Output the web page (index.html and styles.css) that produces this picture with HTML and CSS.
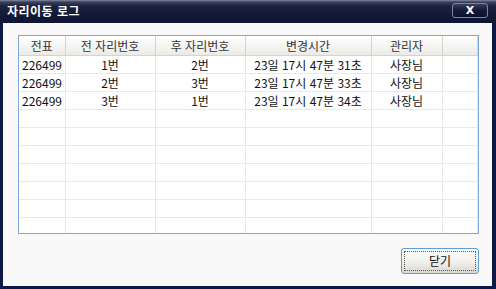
FILE: index.html
```html
<!DOCTYPE html>
<html lang="ko">
<head>
  <meta charset="UTF-8">
  <title>자리이동 로그</title>
  <link rel="stylesheet" href="styles.css">
</head>
<body>

<div class="window">
  <div class="titlebar">
    <span class="title">자리이동 로그</span>
    <div class="close-btn">X</div>
  </div>

  <div class="client">
    <div class="grid">
      <table>
        <colgroup>
          <col class="c-slip">
          <col class="c-seat">
          <col class="c-seat">
          <col class="c-time">
          <col class="c-admin">
          <col>
        </colgroup>
        <thead>
          <tr>
            <th>전표</th>
            <th>전 자리번호</th>
            <th>후 자리번호</th>
            <th>변경시간</th>
            <th>관리자</th>
            <th></th>
          </tr>
        </thead>
        <tbody id="rows"></tbody>
      </table>
    </div>

    <div class="actions">
      <button class="close-dialog"><span>닫기</span></button>
    </div>
  </div>
</div>

<script>
  const logs = [
    ["226499", "1번", "2번", "23일 17시 47분 31초", "사장님"],
    ["226499", "2번", "3번", "23일 17시 47분 33초", "사장님"],
    ["226499", "3번", "1번", "23일 17시 47분 34초", "사장님"]
  ];

  const rows = document.getElementById("rows");
  for (let i = 0; i < 10; i++) {
    const tr = document.createElement("tr");
    const data = logs[i] || ["", "", "", "", ""];
    data.concat([""]).forEach((v, j) => {
      const td = document.createElement("td");
      td.textContent = v;
      if (j === 0) td.className = "left";
      tr.appendChild(td);
    });
    rows.appendChild(tr);
  }
</script>

</body>
</html>
```

FILE: styles.css
```css
html, body {
  margin: 0;
  padding: 0;
  height: 100%;
  overflow: hidden;
  font-family: "Noto Sans CJK KR", "Liberation Sans", sans-serif;
  font-size: 12px;
}

.window {
  height: 289px;
  box-sizing: border-box;
  display: flex;
  flex-direction: column;
  background: #0d1844;
  padding: 0 4px 3px 3px;
}

.titlebar {
  height: 23px;
  flex: none;
  margin: 0 -4px 0 -3px;
  padding: 0 8px 0 7px;
  display: flex;
  align-items: center;
  justify-content: space-between;
  background: linear-gradient(#858b9c 0, #3a4060 2px, #1c2340 6px, #121a38 14px, #0e1634 100%);
}

.title {
  color: #fff;
  font-weight: bold;
  font-size: 12px;
  letter-spacing: 0.5px;
  margin-top: -2px;
}

.close-btn {
  width: 34px;
  height: 13px;
  margin-top: -3px;
  border: 1px solid #7f869b;
  border-radius: 3px;
  background-color: #10173a;
  background-image: linear-gradient(#3a4262, #141b3a 45%, #0b1230);
  color: #fff;
  font-family: "DejaVu Sans", sans-serif;
  font-weight: bold;
  font-size: 11px;
  line-height: 13px;
  text-align: center;
}

.client {
  flex: 1;
  background: #f9f9f9;
  display: flex;
  flex-direction: column;
  padding: 12px 13px 0 15px;
}

.grid {
  height: 199px;
  box-sizing: border-box;
  border: 1px solid #7ea7dc;
  background: #fff;
  overflow: hidden;
}

table {
  width: 100%;
  border-collapse: collapse;
  table-layout: fixed;
}

.c-slip { width: 46px; }
.c-seat { width: 90px; }
.c-time { width: 126px; }
.c-admin { width: 71px; }

th {
  height: 19px;
  padding: 0;
  font-weight: normal;
  color: #333;
  background: linear-gradient(#ffffff, #f3f3f1 60%, #ebeae4);
  border-right: 1px solid #d6d3c8;
  border-bottom: 1px solid #d6d3c8;
  text-align: center;
  line-height: 18px;
}

td {
  height: 17px;
  padding: 0;
  color: #111;
  border-right: 1px solid #ece9de;
  border-bottom: 1px solid #ece9de;
  text-align: center;
  line-height: 16px;
  white-space: nowrap;
}

td.left {
  text-align: left;
  padding-left: 3px;
}

.actions {
  display: flex;
  justify-content: flex-end;
  padding-top: 14px;
}

.close-dialog {
  width: 78px;
  height: 26px;
  padding: 2px;
  border: 1px solid #5d9fd8;
  border-radius: 3px;
  background: linear-gradient(#fefefe, #f1f1ef 50%, #d9d8d2);
  font-family: inherit;
  font-size: 12px;
  color: #111;
}

.close-dialog span {
  display: block;
  height: 100%;
  box-sizing: border-box;
  border: 1px dotted #555;
  line-height: 18px;
}
```
